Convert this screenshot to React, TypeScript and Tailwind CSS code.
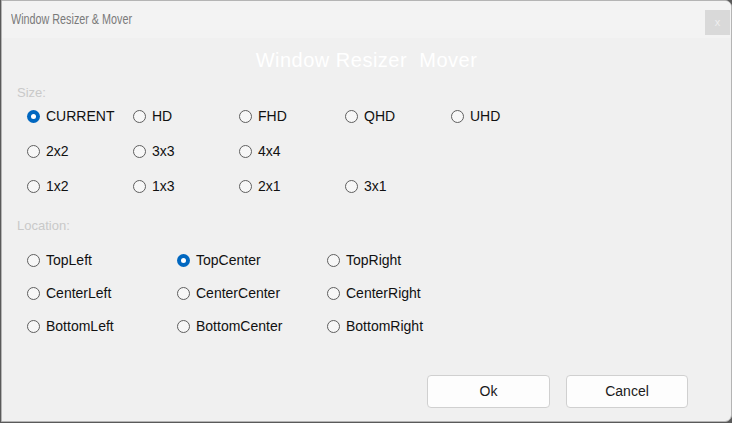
import React, { useState } from 'react';

const sizes = [
  ['CURRENT', 'HD', 'FHD', 'QHD', 'UHD'],
  ['2x2', '3x3', '4x4', '', ''],
  ['1x2', '1x3', '2x1', '3x1', ''],
];

const locations = [
  ['TopLeft', 'TopCenter', 'TopRight'],
  ['CenterLeft', 'CenterCenter', 'CenterRight'],
  ['BottomLeft', 'BottomCenter', 'BottomRight'],
];

const Radio: React.FC<{ label: string; checked: boolean; onClick: () => void }> = ({ label, checked, onClick }) => (
  <div className="flex items-center gap-[6px] h-[22px] cursor-default" onClick={onClick}>
    {checked ? (
      <span className="w-[13px] h-[13px] rounded-full bg-[#0067c0] flex items-center justify-center shrink-0">
        <span className="w-[5px] h-[5px] rounded-full bg-white" />
      </span>
    ) : (
      <span className="w-[13px] h-[13px] rounded-full border border-[#5f5f5f] bg-[#f7f7f7] shrink-0" />
    )}
    <span className="text-[14px] text-[#111] leading-[22px]">{label}</span>
  </div>
);

const App: React.FC = () => {
  const [size, setSize] = useState('CURRENT');
  const [loc, setLoc] = useState('TopCenter');

  return (
    <div className="w-[732px] h-[423px] bg-[#5a5a5a] font-['Liberation_Sans',Arial,sans-serif]">
      <div className="w-[731px] h-[422px] ml-[1px] bg-[#f0f0f0] border border-[#b4b4b4] rounded-tr-[7px] rounded-br-[7px] overflow-hidden flex flex-col">
        {/* Title bar */}
        <div className="h-[37px] bg-[#f3f3f3] flex items-center justify-between pl-[9px] pr-[1px] shrink-0">
          <span className="text-[14px] text-[#7a7a7a] scale-x-[0.77] origin-left whitespace-nowrap">
            Window Resizer &amp; Mover
          </span>
          <div className="w-[25px] h-[25px] bg-[#d9d9d9] flex items-center justify-center text-[11px] text-[#efefef] leading-none mt-[5px]">
            x
          </div>
        </div>

        {/* Heading */}
        <div className="h-[44px] pt-[10px] text-center shrink-0">
          <span className="text-[20px] leading-[24px] text-white tracking-[0.5px]">Window Resizer&nbsp;&nbsp;Mover</span>
        </div>

        {/* Size */}
        <div className="h-[23px] leading-[22px] pl-[15px] text-[13px] text-[#c9c9c9]">Size:</div>
        <div className="grid grid-cols-[106px_106px_106px_106px_106px] gap-y-[13px] pl-[25px]">
          {sizes.flat().map((s, i) =>
            s ? (
              <Radio key={i} label={s} checked={size === s} onClick={() => setSize(s)} />
            ) : (
              <div key={i} />
            ),
          )}
        </div>

        {/* Location */}
        <div className="h-[24px] leading-[24px] pl-[15px] text-[13px] text-[#c9c9c9] mt-[17px]">Location:</div>
        <div className="grid grid-cols-[150px_150px_150px] gap-y-[11px] pl-[25px] mt-[11px]">
          {locations.flat().map((l) => (
            <Radio key={l} label={l} checked={loc === l} onClick={() => setLoc(l)} />
          ))}
        </div>

        {/* Buttons */}
        <div className="flex justify-end gap-[16px] pr-[43px] mt-[38px]">
          <button className="w-[123px] h-[33px] bg-[#fdfdfd] border border-[#d0d0d0] rounded-[4px] text-[14px] text-[#1a1a1a]">
            Ok
          </button>
          <button className="w-[122px] h-[33px] bg-[#fdfdfd] border border-[#d0d0d0] rounded-[4px] text-[14px] text-[#1a1a1a]">
            Cancel
          </button>
        </div>
      </div>
    </div>
  );
};

export default App;
